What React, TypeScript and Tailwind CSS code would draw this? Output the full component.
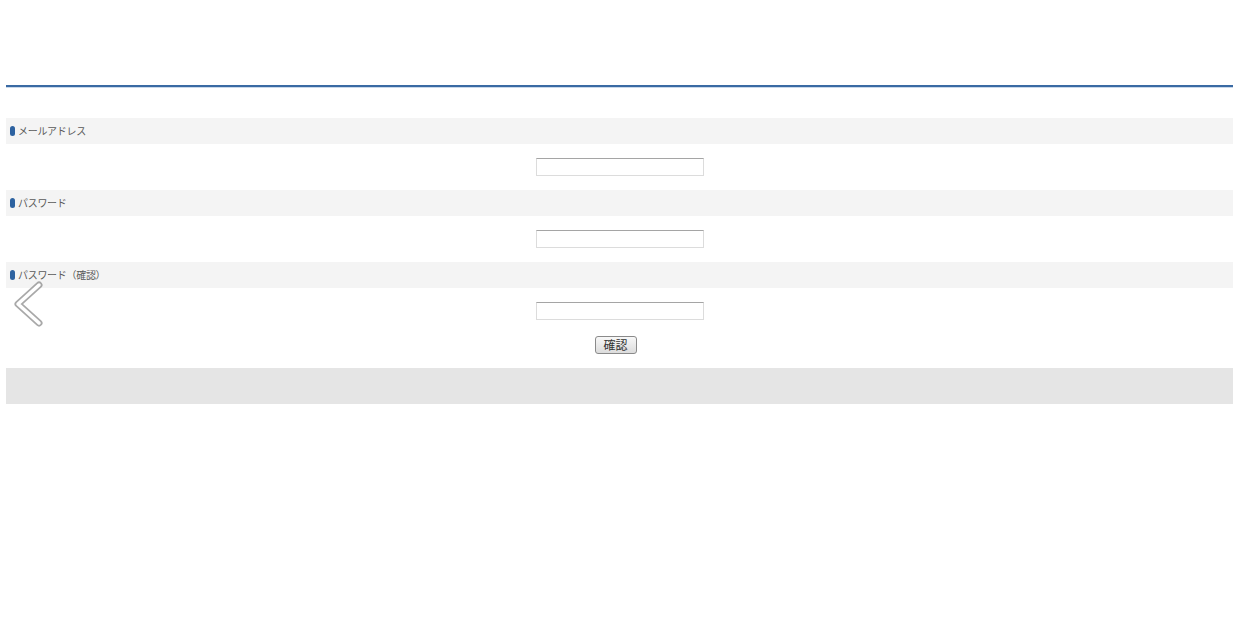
export default function App() {
  const fields = ['メールアドレス', 'パスワード', 'パスワード（確認）'];

  return (
    <div
      className="relative min-h-[639px] bg-white pl-[6px] pr-[2px] text-[10px] text-[#5a5a5a]"
      style={{ fontFamily: '"Noto Sans CJK JP", "Noto Sans", sans-serif' }}
    >
      <div className="h-[85px]" />
      <div className="h-[2px] bg-[#3a6aa3]" />
      <div className="h-[1px] bg-[#c9d8ea]" />

      <form className="pt-[30px]" onSubmit={(e) => e.preventDefault()}>
        {fields.map((label, i) => (
          <div key={i}>
            <div className="flex h-[26px] items-center bg-[#f4f4f4] pl-[4px]">
              <span className="mr-[3px] inline-block h-[10px] w-[5px] rounded-[3px] bg-[#2d62a0]" />
              <span className="leading-none tracking-[-0.3px]">{label}</span>
            </div>
            <div className={`flex justify-center pt-[14px] ${i < 2 ? 'pb-[14px]' : 'pb-[16px]'}`}>
              <input
                type={i === 0 ? 'text' : 'password'}
                className="h-[18px] w-[168px] border border-[#dcdcdc] border-t-[#a5a5a5] bg-white outline-none"
              />
            </div>
          </div>
        ))}

        <div className="flex justify-center">
          <button
            type="submit"
            className="ml-[-8px] flex h-[18px] w-[42px] items-center justify-center rounded-[3px] border border-[#8a8a8a] bg-gradient-to-b from-[#f8f8f8] to-[#dcdcdc] text-[12px] leading-none text-[#333]"
          >
            確認
          </button>
        </div>
      </form>

      <div className="mt-[14px] h-[36px] bg-[#e5e5e5]" />

      {/* back arrow overlay */}
      <svg
        className="absolute left-[12px] top-[281px]"
        width="34"
        height="46"
        viewBox="0 0 34 46"
        fill="none"
      >
        <polyline
          points="27,4 6,23 27,42"
          stroke="#8c8c8c"
          strokeWidth="7"
          strokeLinecap="round"
          strokeLinejoin="round"
          opacity="0.75"
        />
        <polyline
          points="27,4 6,23 27,42"
          stroke="#ffffff"
          strokeWidth="3.5"
          strokeLinecap="round"
          strokeLinejoin="round"
        />
      </svg>
    </div>
  );
}
